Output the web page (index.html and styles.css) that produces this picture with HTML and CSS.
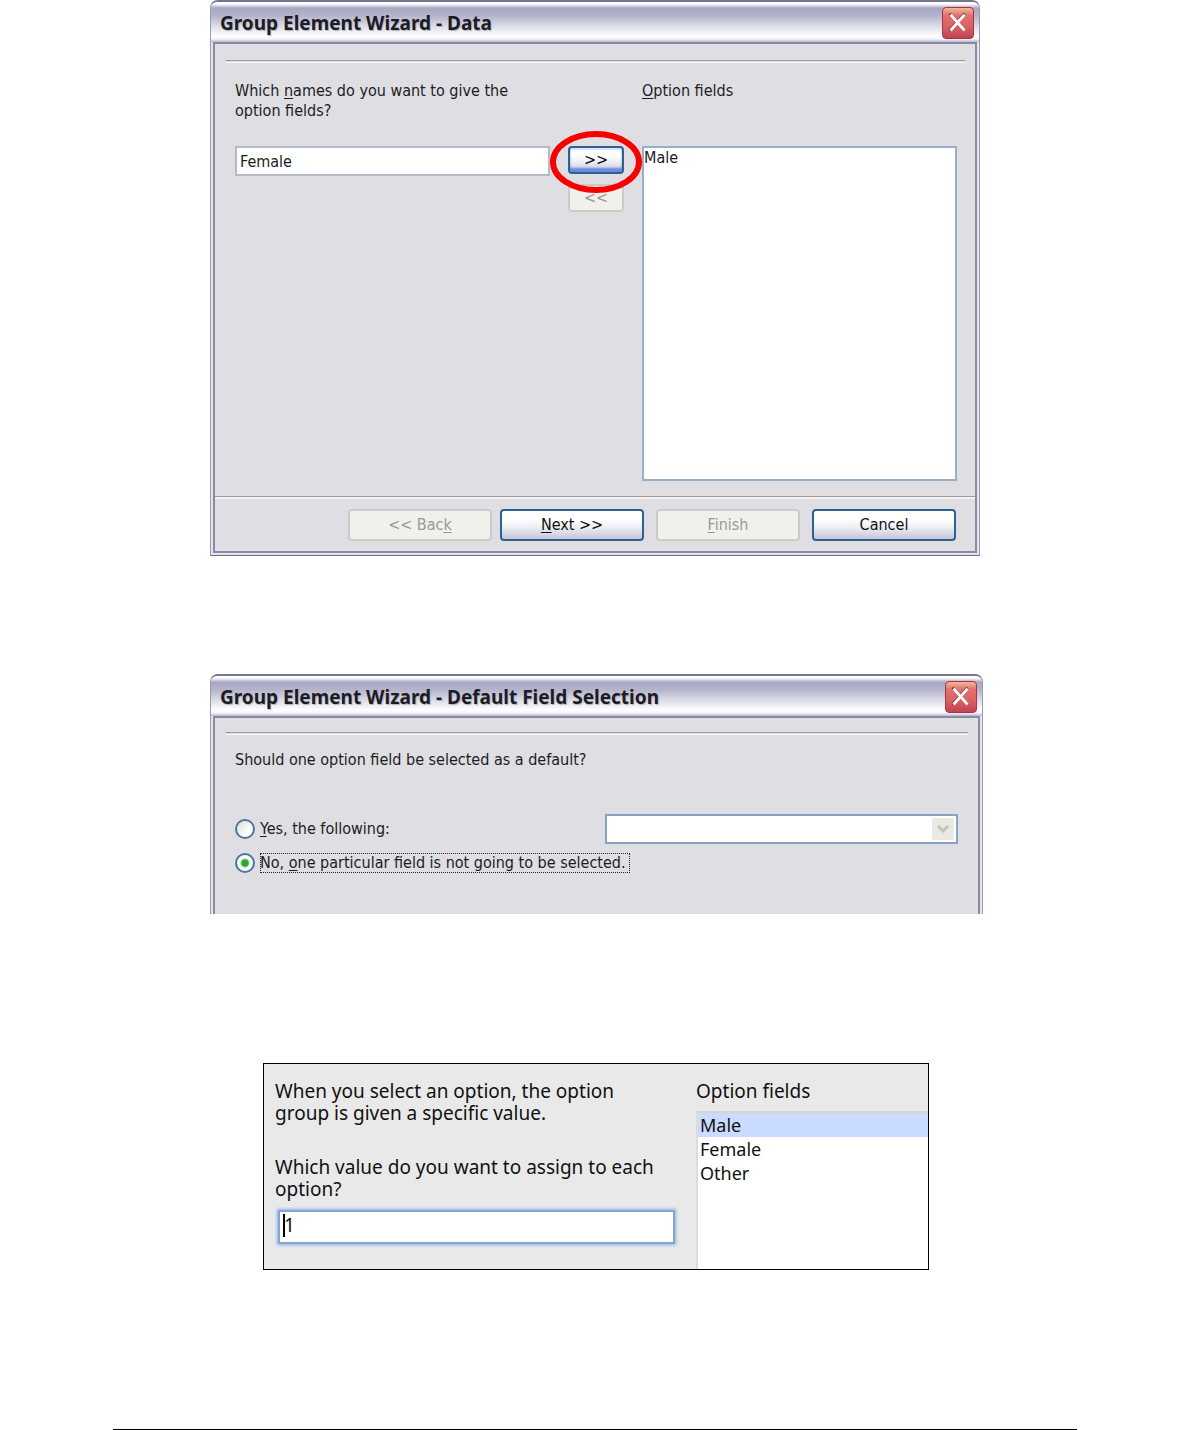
FILE: index.html
```
<!DOCTYPE html>
<html lang="en">
  <head>
    <meta charset="utf-8">
    <title>Group Element Wizard</title>
    <link rel="stylesheet" href="styles.css">
  </head>
  <body>
    <main class="page">
      <!-- Data -->
      <form class="dialog dialog-data">
        <div class="titlebar">
          <h2>Group Element Wizard - Data</h2>
          <button type="button" class="close" aria-label="Close">
            <svg viewBox="0 0 32 32"><path class="shade" d="M7 6l16 18M23 6L7 24"/><path d="M8 7l15 17M23 7L8 24"/></svg>
          </button>
        </div>
        <div class="client">
          <hr>
          <div class="data-grid">
            <label for="name">Which <u>n</u>ames do you want to give the<br>option fields?</label>
            <label for="fields" class="fields-label"><u>O</u>ption fields</label>
            <input type="text" id="name" class="name" value="Female">
            <div class="move">
              <button type="button" class="btn focused">&gt;&gt;</button>
              <button type="button" class="btn" disabled>&lt;&lt;</button>
              <svg class="marker" viewBox="0 0 92 63"><ellipse cx="46" cy="31" rx="43" ry="28"/></svg>
            </div>
            <select id="fields" class="list" size="10">
              <option>Male</option>
            </select>
          </div>
          <div class="buttons">
            <button type="button" class="btn" disabled>&lt;&lt; Bac<u>k</u></button>
            <button type="button" class="btn"><u>N</u>ext &gt;&gt;</button>
            <button type="button" class="btn finish" disabled><u>F</u>inish</button>
            <button type="button" class="btn cancel">Cancel</button>
          </div>
        </div>
      </form>

      <!-- Default Field Selection -->
      <form class="dialog dialog-default">
        <div class="titlebar">
          <h2>Group Element Wizard - Default Field Selection</h2>
          <button type="button" class="close" aria-label="Close">
            <svg viewBox="0 0 32 32"><path class="shade" d="M7 6l16 18M23 6L7 24"/><path d="M8 7l15 17M23 7L8 24"/></svg>
          </button>
        </div>
        <div class="client">
          <hr>
          <p class="question">Should one option field be selected as a default?</p>
          <div class="choice">
            <input type="radio" name="default" id="yes">
            <label for="yes"><u>Y</u>es, the following:</label>
            <div class="combo">
              <select aria-label="Default field" disabled></select>
              <svg viewBox="0 0 22 22"><path d="M6 8l5 5 5-5"/></svg>
            </div>
          </div>
          <div class="choice">
            <input type="radio" name="default" id="no" checked>
            <label for="no" class="dotted">No, <u>o</u>ne particular field is not going to be selected.</label>
          </div>
        </div>
      </form>

      <!-- Option values -->
      <form class="panel">
        <div class="panel-left">
          <p>When you select an option, the option<br>group is given a specific value.</p>
          <label for="value">Which value do you want to assign to each<br>option?</label>
          <div class="value-box"><input type="text" id="value" value="1"></div>
        </div>
        <div class="panel-right">
          <label for="values">Option fields</label>
          <select id="values" size="6">
            <option selected>Male</option>
            <option>Female</option>
            <option>Other</option>
          </select>
        </div>
      </form>
    </main>
    <hr class="page-rule">
  </body>
</html>
```
FILE: styles.css
```
* {
  box-sizing: border-box;
}

body {
  margin: 0;
  padding: 0 113px;
  background: #fff;
  color: #1c1c24;
  font: 16px/20px "DejaVu Sans Condensed", "Noto Sans", sans-serif;
}

h2, p, hr {
  margin: 0;
}

input, select, button {
  font: inherit;
  color: inherit;
}

u {
  text-underline-offset: 2px;
}

.page {
  padding: 0 94px 0 97px;
}

/* XP style windows */
.dialog {
  display: flex;
  flex-direction: column;
  padding: 0 2px 2px;
  border: 1px solid #9a99ae;
  border-top: 2px solid #77768f;
  border-bottom-color: #6d6c88;
  border-radius: 8px 8px 0 0;
  background: #e4e4ec;
}

.dialog-data {
  max-width: 770px;
  height: 556px;
}

.dialog-default {
  height: 240px;
  margin-top: 118px;
  padding-bottom: 0;
  border-bottom: 0;
}

.titlebar {
  display: flex;
  align-items: center;
  justify-content: space-between;
  height: 40px;
  margin: 0 -2px;
  padding: 1px 5px 0 9px;
  border-radius: 6px 6px 0 0;
  background: linear-gradient(#fff 0, #fff 2px, #a9a8c4 6px, #b4b4cc 14px, #dcdce8 24px, #fff 34px, #f4f4f8 37px, #b5b5c8 40px);
}

.titlebar h2 {
  font: bold 19px/24px "Noto Sans", "Open Sans", sans-serif;
  text-shadow: 1px 1px 1px #b0b0c4;
}

.close {
  width: 32px;
  height: 32px;
  padding: 0;
  border: 1px solid #a8324a;
  border-radius: 4px;
  background: linear-gradient(#efb89a, #e27069 25%, #dc6262 60%, #c04453);
}

.close svg {
  display: block;
  fill: none;
  stroke: #fff;
  stroke-width: 3;
}

.close .shade {
  stroke: #6d3038;
}

.client {
  display: flex;
  flex: 1;
  flex-direction: column;
  border: 2px solid #8b89a5;
  background: #dfdee3;
}

.dialog-default .client {
  border-bottom: 0;
}

.client hr {
  height: 3px;
  margin: 16px 10px 0 11px;
  border: 0;
  border-top: 1px solid #999;
  border-bottom: 1px solid #f8f8f8;
}

.dialog-default hr {
  margin-top: 14px;
}

.data-grid {
  display: grid;
  flex: 1;
  grid-template-columns: 1fr 56px 1fr;
  grid-template-rows: 44px 1fr;
  gap: 21px 18px;
  padding: 18px 18px 15px 20px;
}

.fields-label {
  grid-column: 3;
}

.name {
  width: 100%;
  height: 30px;
  padding: 0 3px;
  border: 2px solid #b3bcc6;
  background: #fff;
}

.list {
  width: 100%;
  padding: 0;
  border: 2px solid #96b0c8;
  border-radius: 0;
  background: #fff;
  outline: 0;
}

.list option {
  padding: 0;
}

.btn {
  padding: 0;
  border: 2px solid #2f618e;
  border-radius: 4px;
  background: linear-gradient(#fff 30%, #ececf5 60%, #c5c4d8);
  color: #111;
}

.btn:disabled {
  border-color: #cbcbc8;
  background: #f0f1ec;
  color: #999;
}

.move {
  position: relative;
  display: flex;
  flex-direction: column;
  gap: 10px;
}

.move .btn {
  height: 28px;
}

.focused {
  box-shadow: inset 0 -4px 2px #668be0, inset 0 2px 1px #d6e4ff;
}

/* red ring over the add button */
.marker {
  position: absolute;
  top: -15px;
  left: -18px;
  width: 92px;
  height: 63px;
  fill: none;
  stroke: #f80000;
  stroke-width: 6;
}

.buttons {
  display: flex;
  justify-content: flex-end;
  gap: 8px;
  padding: 12px 19px 10px;
  border-top: 1px solid #9c9ca6;
  box-shadow: inset 0 2px #f1f1f3;
}

.buttons .btn {
  width: 144px;
  height: 32px;
}

.buttons .finish, .buttons .cancel {
  margin-left: 4px;
}

/* default field */
.question {
  margin: 15px 20px 43px;
}

.choice {
  display: flex;
  align-items: center;
  height: 32px;
  margin: 0 20px 2px;
}

.choice input {
  width: 20px;
  height: 20px;
  margin: 0 5px 0 0;
  border: 2px solid #4b779c;
  border-radius: 50%;
  background: linear-gradient(135deg, #dcdcd6, #fff 70%);
  appearance: none;
}

.choice input:checked {
  background: radial-gradient(#2ca52a 0, #2ca52a 3px, #f8f8f6 5px);
}

.dotted {
  padding-right: 4px;
  outline: 1px dotted #222;
  outline-offset: -1px;
}

.combo {
  position: relative;
  width: 353px;
  height: 30px;
  margin-left: auto;
}

.combo select {
  width: 100%;
  height: 100%;
  border: 2px solid #86a5c5;
  border-radius: 0;
  background: #fff;
  opacity: 1;
  appearance: none;
}

.combo svg {
  position: absolute;
  top: 4px;
  right: 4px;
  width: 22px;
  height: 22px;
  border-radius: 2px;
  background: #e9e9e1;
  fill: none;
  stroke: #c3c3bb;
  stroke-width: 3;
}

/* value panel */
.panel {
  display: grid;
  grid-template-columns: 1fr 232px;
  height: 207px;
  margin: 149px 54px 0 53px;
  border: 1px solid #000;
  background: #e9e9e9;
  color: #111;
  font: 19px/22px "Noto Sans", "Open Sans", sans-serif;
}

.panel-left {
  padding: 16px 21px 0 11px;
}

.panel-left p {
  margin-bottom: 32px;
}

.value-box {
  position: relative;
  margin: 10px 0 0 3px;
}

.value-box input {
  display: block;
  width: 100%;
  height: 34px;
  padding: 0 4px 4px;
  border: 2px solid #86a4d4;
  background: #fff;
  box-shadow: 0 0 3px 1px #8fb0e6;
}

/* text caret */
.value-box::after {
  content: "";
  position: absolute;
  top: 4px;
  left: 5px;
  width: 2px;
  height: 23px;
  background: #000;
}

.panel-right {
  display: flex;
  flex-direction: column;
  padding-top: 16px;
}

.panel-right select {
  flex: 1;
  margin-top: 9px;
  padding: 0;
  border: 0;
  border-top: 2px solid #d4d4d4;
  border-left: 2px solid #dcdcdc;
  border-radius: 0;
  background: #fff;
  font-size: 18px;
  outline: 0;
}

.panel-right option {
  min-height: 24px;
  padding: 0 2px;
  line-height: 24px;
}

.panel-right option:checked {
  background: linear-gradient(#c9dbfe, #c9dbfe);
  color: #111;
}

.page-rule {
  height: 1px;
  margin-top: 159px;
  border: 0;
  background: #000;
}
```
